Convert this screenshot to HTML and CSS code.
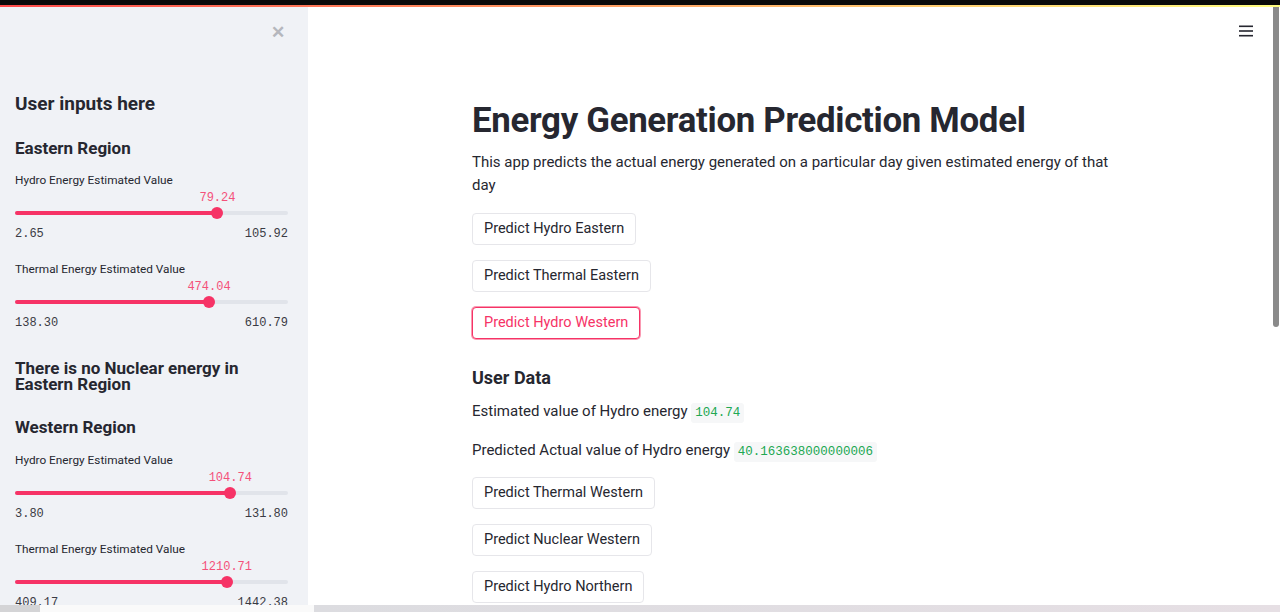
FILE: index.html
```html
<!DOCTYPE html>
<html>
<head>
<meta charset="utf-8">
<link rel="stylesheet" href="styles.css">
</head>
<body>
<div class="app">
  <div class="decoration"></div>
  <div class="body-row">
    <aside class="sidebar">
      <div class="close-row"><span class="close">✕</span></div>
      <h2 class="sb-title">User inputs here</h2>
      <h3 class="sb-region">Eastern Region</h3>
      <div class="slider">
        <div class="slider-label">Hydro Energy Estimated Value</div>
        <div class="slider-body">
          <div class="track"><div class="fill" style="width:74.16%"></div><div class="thumb" style="left:74.16%"><span class="thumb-value">79.24</span></div></div>
        </div>
        <div class="ticks"><span>2.65</span><span>105.92</span></div>
      </div>
      <div class="slider">
        <div class="slider-label">Thermal Energy Estimated Value</div>
        <div class="slider-body">
          <div class="track"><div class="fill" style="width:71.06%"></div><div class="thumb" style="left:71.06%"><span class="thumb-value">474.04</span></div></div>
        </div>
        <div class="ticks"><span>138.30</span><span>610.79</span></div>
      </div>
      <h3 class="sb-region sb-note">There is no Nuclear energy in Eastern Region</h3>
      <h3 class="sb-region">Western Region</h3>
      <div class="slider">
        <div class="slider-label">Hydro Energy Estimated Value</div>
        <div class="slider-body">
          <div class="track"><div class="fill" style="width:78.86%"></div><div class="thumb" style="left:78.86%"><span class="thumb-value">104.74</span></div></div>
        </div>
        <div class="ticks"><span>3.80</span><span>131.80</span></div>
      </div>
      <div class="slider">
        <div class="slider-label">Thermal Energy Estimated Value</div>
        <div class="slider-body">
          <div class="track"><div class="fill" style="width:77.58%"></div><div class="thumb" style="left:77.58%"><span class="thumb-value">1210.71</span></div></div>
        </div>
        <div class="ticks"><span>409.17</span><span>1442.38</span></div>
      </div>
    </aside>
    <main class="main">
      <div class="menu-row">
        <svg class="hamburger" width="14" height="12" viewBox="0 0 14 12"><rect x="0" y="0.5" width="14" height="1.6" fill="#262730"/><rect x="0" y="5.2" width="14" height="1.6" fill="#262730"/><rect x="0" y="9.9" width="14" height="1.6" fill="#262730"/></svg>
      </div>
      <div class="content">
        <h1 class="title">Energy Generation Prediction Model</h1>
        <p class="para">This app predicts the actual energy generated on a particular day given estimated energy of that day</p>
        <div class="btn-row"><button class="btn">Predict Hydro Eastern</button></div>
        <div class="btn-row"><button class="btn">Predict Thermal Eastern</button></div>
        <div class="btn-row"><button class="btn btn-focus">Predict Hydro Western</button></div>
        <h3 class="subhead">User Data</h3>
        <p class="line">Estimated value of Hydro energy <code class="code">104.74</code></p>
        <p class="line">Predicted Actual value of Hydro energy <code class="code">40.163638000000006</code></p>
        <div class="btn-row"><button class="btn">Predict Thermal Western</button></div>
        <div class="btn-row"><button class="btn">Predict Nuclear Western</button></div>
        <div class="btn-row"><button class="btn">Predict Hydro Northern</button></div>
      </div>
      <div class="scrollbar"></div>
    </main>
  </div>
  <div class="taskbar">
    <div class="tb-a"></div><div class="tb-b"></div><div class="tb-c"></div>
  </div>
</div>
</body>
</html>
```
FILE: styles.css
```css
* { box-sizing: border-box; }
html, body { margin: 0; padding: 0; }
body {
  width: 1280px;
  height: 612px;
  overflow: hidden;
  font-family: Roboto, "Noto Sans", sans-serif;
  color: #262730;
  background: #fff;
}
.app {
  height: 612px;
  display: flex;
  flex-direction: column;
}
.decoration {
  height: 7px;
  flex: none;
  border-top: 5px solid #0a0a0a;
  background: linear-gradient(90deg, #ff4b4b, #fffd80);
}
.body-row {
  flex: 1;
  display: flex;
  min-height: 0;
}
.sidebar {
  width: 308px;
  flex: none;
  background: #f0f2f6;
  padding: 0 20px 0 15px;
  overflow: hidden;
}
.close-row {
  display: flex;
  justify-content: flex-end;
  height: 50px;
  padding-top: 15px;
  padding-right: 3px;
}
.close {
  font-size: 17px;
  color: #b5b7bd;
  font-weight: bold;
  line-height: 20px;
}
.sb-title {
  margin: 35px 0 0;
  font-size: 19px;
  font-weight: 700;
  line-height: 24px;
}
.sb-region {
  margin: 21px 0 0;
  font-size: 17px;
  font-weight: 700;
  line-height: 22px;
}
.sb-note {
  margin-top: 29px;
  line-height: 16px;
  font-size: 17px;
}
.sb-note + .sb-region { margin-top: 24px; }
.slider { margin-top: 13px; }
.slider + .slider { margin-top: 19px; }
.sb-note + .sb-region + .slider { margin-top: 14px; }
.slider-label {
  font-size: 11.8px;
  line-height: 16px;
  color: #262730;
}
.slider-body {
  height: 33px;
  display: flex;
  align-items: flex-end;
  padding-bottom: 6px;
}
.track {
  position: relative;
  width: 100%;
  height: 4px;
  background: #e1e4ea;
  border-radius: 2px;
}
.fill {
  height: 4px;
  background: #f63366;
  border-radius: 2px;
}
.thumb {
  position: absolute;
  top: -4px;
  width: 12px;
  height: 12px;
  margin-left: -6px;
  border-radius: 50%;
  background: #f63366;
}
.thumb-value {
  position: absolute;
  bottom: 14px;
  left: 50%;
  transform: translateX(-50%);
  font-family: "Liberation Mono", "DejaVu Sans Mono", monospace;
  font-size: 12px;
  color: #f4517a;
  white-space: nowrap;
}
.ticks {
  display: flex;
  justify-content: space-between;
  font-family: "Liberation Mono", "DejaVu Sans Mono", monospace;
  font-size: 12px;
  line-height: 16px;
  color: #3a3b44;
  margin-top: 5px;
}
.main {
  flex: 1;
  display: flex;
  position: relative;
  overflow: hidden;
}
.menu-row {
  position: absolute;
  top: 18px;
  right: 27px;
}
.hamburger { display: block; }
.content {
  margin-left: 164px;
  width: 640px;
  padding-top: 93px;
}
.title {
  margin: 0;
  font-size: 34.8px;
  font-weight: 700;
  line-height: 40px;
  letter-spacing: -0.3px;
}
.para {
  margin: 11px 0 0;
  font-size: 15px;
  line-height: 23px;
  width: 640px;
}
.btn-row { margin-top: 15px; }
.para + .btn-row { margin-top: 16px; }
.btn {
  font-family: Roboto, "Noto Sans", sans-serif;
  font-size: 14.5px;
  color: #262730;
  background: #fff;
  border: 1px solid #e6e6ea;
  border-radius: 4px;
  height: 32px;
  padding: 0 11px;
  line-height: 30px;
}
.btn-focus {
  color: #f63366;
  border-color: #f63366;
  box-shadow: 0 0 0 1px rgba(246, 51, 102, 0.5);
}
.subhead {
  margin: 27px 0 0;
  font-size: 18px;
  font-weight: 700;
  line-height: 24px;
}
.line {
  margin: 9px 0 0;
  font-size: 15px;
  line-height: 24px;
}
.line + .line { margin-top: 13px; }
.line + .btn-row { margin-top: 13px; }
.code {
  font-family: "Liberation Mono", "DejaVu Sans Mono", monospace;
  font-size: 12.5px;
  color: #21a852;
  background: #f6f7f8;
  padding: 3px 4px;
  border-radius: 3px;
}
.scrollbar {
  position: absolute;
  right: 1px;
  top: 0;
  width: 6px;
  height: 320px;
  background: #8a8a8a;
  border-radius: 0 0 3px 3px;
}
.taskbar {
  height: 7px;
  flex: none;
  display: flex;
}
.tb-a { width: 40px; background: #d4d4d6; }
.tb-b { width: 274px; background: #fafafa; }
.tb-c { flex: 1; background: linear-gradient(90deg, #dcdce0, #e6dfe4); }
```
